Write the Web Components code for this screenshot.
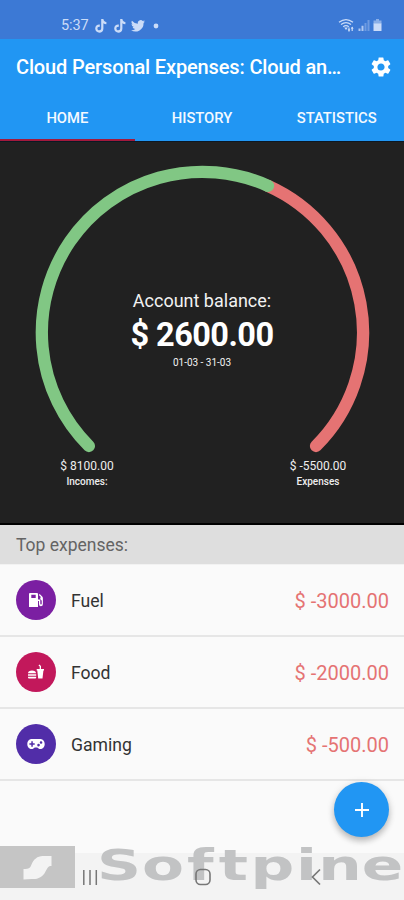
<!DOCTYPE html>
<html lang="en">
<head>
<meta charset="utf-8">
<title>Cloud Personal Expenses</title>
<style>
html,body{margin:0;padding:0}
body{width:404px;height:900px;overflow:hidden;background:#fafafa;font-family:Roboto,"Liberation Sans",sans-serif}
</style>
</head>
<body>
<expense-app></expense-app>
<script>
function define(name, html) {
  const t = document.createElement('template');
  t.innerHTML = html;
  customElements.define(name, class extends HTMLElement {
    constructor() {
      super();
      this.attachShadow({mode: 'open'}).append(t.content.cloneNode(true));
    }
  });
}

define('status-bar', `
<style>
:host{display:flex;height:39px;box-sizing:border-box;padding:13px 19px 0 61px;background:#3c79d5;color:#cbdcf8;align-items:center;justify-content:space-between}
.g{display:flex;align-items:center}
span{font-size:14.5px;line-height:24px;width:28px;letter-spacing:-.1px}
svg{display:block;fill:currentColor}
</style>
<div class="g"><span>5:37</span>
<svg style="margin-left:6px" width="12" height="14" viewBox="0 0 12 14"><path d="M6.2 0h2.2c.2 1.700 1.200 2.800 3 3v2.200c-1.200 0-2.200-.4-3-1v5.200c0 6-8.400 5.400-8.200 0 .1-2.500 2.100-4.200 4.600-3.900v2.400c-3.300-.6-2.900 3.600-.5 3.400 1.300-.1 1.900-.9 1.900-2.300z"/></svg>
<svg style="margin-left:7px" width="12" height="14" viewBox="0 0 12 14"><path d="M6.2 0h2.200c.2 1.700 1.200 2.800 3 3v2.200c-1.200 0-2.200-.4-3-1v5.200c0 6-8.400 5.400-8.200 0 .1-2.500 2.100-4.200 4.600-3.900v2.400c-3.300-.6-2.900 3.600-.5 3.400 1.300-.1 1.900-.9 1.900-2.300z"/></svg>
<svg style="margin-left:5px" width="14" height="14" viewBox="1 2 22 20"><path d="M23 4.900a9 9 0 0 1-2.600.7 4.500 4.500 0 0 0 2-2.500 9 9 0 0 1-2.900 1.100 4.500 4.500 0 0 0-7.700 4.100A12.800 12.800 0 0 1 2.500 3.600a4.500 4.500 0 0 0 1.400 6 4.500 4.500 0 0 1-2-.6 4.500 4.500 0 0 0 3.600 4.500 4.500 4.500 0 0 1-2 .1 4.500 4.500 0 0 0 4.200 3.100A9 9 0 0 1 1 18.600 12.800 12.800 0 0 0 20.700 7.200 9 9 0 0 0 23 4.900z"/></svg>
<svg style="margin-left:8px" width="6" height="6"><circle cx="3" cy="3" r="2.400"/></svg>
</div>
<div class="g" style="padding-right:2px">
<svg width="45" height="15" viewBox="0 0 45 15" style="margin-top:-2px">
<g fill="none" stroke="#cbdcf8" stroke-width="1.300"><path d="M1 4.300Q8 -1.200 15 4.300M3 6.500Q8 2.600 13 6.500M5.200 8.800Q8 6.600 10.800 8.800"/></g>
<path d="M6.200 9.500h3.600L8 12z"/><path d="M11 9.500v4M14.200 13v-4" stroke="#cbdcf8" stroke-width="1.200"/><path d="M9.600 11.300h2.800L11 13.600zM12.800 10.800h2.800l-1.400-2.300z"/>
<path opacity=".8" d="M20.500 10.500h2v2.500h-2zM23.500 7.800h2V13h-2z"/><path opacity=".35" d="M26.500 5h2v8h-2zM29.500 2h2v11h-2z"/>
<path opacity=".55" d="M38 1h3v1.500h2.500V6h-8V2.500H38z"/><path d="M35.500 5.500h8V13h-8z"/>
</svg></div>`);

define('title-bar', `
<style>
:host{display:flex;height:56px;align-items:center;justify-content:space-between;padding:0 11px 0 16px;color:#fff}
b{font-weight:500;font-size:20px;letter-spacing:-.14px;white-space:nowrap}
svg{display:block;fill:#fff;margin-top:-1px}
</style>
<b>Cloud Personal Expenses: Cloud an…</b>
<svg width="24" height="24" viewBox="0 0 24 24"><path d="M19.140 12.940c.04-.3.060-.61.060-.94s-.02-.64-.07-.94l2.030-1.580a.49.49 0 0 0 .12-.61l-1.920-3.320a.488.488 0 0 0-.59-.22l-2.390.96c-.5-.38-1.030-.7-1.620-.94l-.36-2.540a.484.484 0 0 0-.48-.41h-3.840c-.24 0-.43.17-.47.41l-.36 2.540c-.59.24-1.130.57-1.620.94l-2.390-.96c-.22-.08-.47 0-.59.22L2.740 8.870c-.12.21-.08.47.12.61l2.030 1.580c-.05.3-.09.63-.09.940s.02.64.07.94l-2.030 1.580a.49.49 0 0 0-.12.61l1.920 3.320c.12.22.37.29.59.22l2.390-.96c.5.38 1.030.7 1.620.94l.36 2.540c.05.24.24.41.48.41h3.840c.24 0 .44-.17.47-.41l.36-2.540c.59-.24 1.130-.56 1.620-.94l2.390.96c.22.08.47 0 .59-.22l1.920-3.320c.12-.22.07-.47-.12-.61zM12 15.600A3.610 3.610 0 0 1 8.400 12c0-1.980 1.620-3.600 3.600-3.600s3.600 1.620 3.600 3.600-1.620 3.600-3.600 3.600z"/></svg>`);

define('tab-item', `
<style>
:host{display:flex;flex:1;height:46px;box-sizing:border-box;justify-content:center;align-items:center;padding-top:2px;border-bottom:2px solid transparent;font-size:14.800px;letter-spacing:-.03px;font-weight:500;color:#f3f9ff}
:host([active]){border-bottom-color:#a31a3c}
</style><slot></slot>`);

define('tab-strip', `<style>:host{display:flex}</style><slot></slot>`);

define('gauge-label', `
<style>
:host{display:flex;flex-direction:column;align-items:center;width:90px;color:#eee}
.a{font-size:12px;line-height:15px}
.b{font-size:10px;line-height:15px;font-weight:500}
</style><div class="a"><slot name="amount"></slot></div><div class="b"><slot></slot></div>`);

define('balance-gauge', `
<style>
:host{display:grid;background:#212121;border-top:1px solid #0c1824;border-bottom:2px solid #000;box-sizing:border-box;height:384px;grid-template:381px/404px;color:#f2f2f2}
svg,.c,.l{grid-area:1/1}
svg{display:block;margin-top:-2px}
.c{display:flex;flex-direction:column;align-items:center;padding-top:147px}
.t{font-size:18px;line-height:24px}
.n{font-size:32.500px;line-height:43px;font-weight:700;color:#fff;letter-spacing:-.55px;padding-top:1px}
.d{font-size:10px;line-height:12px}
.l{display:flex;align-self:start;justify-content:space-between;padding:317px 41px 0 42px}
</style>
<svg width="404" height="384" viewBox="0 140 404 384" fill="none" stroke-width="12.300" stroke-linecap="round">
<path stroke="#e57373" d="M268 185.800A160.600 160.600 0 0 1 316 446"/>
<path stroke="#81c784" d="M88.900 446A160.600 160.600 0 0 1 268 185.800"/></svg>
<div class="c"><div class="t">Account balance:</div><div class="n">$ 2600.00</div><div class="d">01-03 - 31-03</div></div>
<div class="l"><gauge-label><span slot="amount">$ 8100.00</span>Incomes:</gauge-label><gauge-label><span slot="amount">$ -5500.00</span>Expenses</gauge-label></div>`);

define('section-header', `
<style>:host{display:flex;align-items:center;height:40px;box-sizing:border-box;padding:1px 16px 0;background:#dedede;border-bottom:1px solid #f2f2f2;color:#646464;font-size:17.500px;}</style><slot></slot>`);

define('expense-row', `
<style>
:host{display:flex;align-items:center;height:72px;box-sizing:border-box;padding:0 15px 1px 16px;border-bottom:2px solid #e6e6e6}
.i{width:40px;height:40px;border-radius:50%;background:var(--tone);display:grid;place-items:center;margin-right:15px}
.n{flex:1;font-size:17.600px;color:#333;padding-top:2px}
.v{font-size:20px;color:#e57373;padding-top:2px}
</style><div class="i"><slot name="icon"></slot></div><div class="n"><slot></slot></div><div class="v"><slot name="value"></slot></div>`);

define('add-button', `
<style>
:host{position:absolute;left:334px;top:782px;width:55px;height:55px;border-radius:50%;background:#2196f3;display:grid;place-items:center;box-shadow:0 4px 6px rgba(0,0,0,.22),0 1px 8px rgba(0,0,0,.1)}
svg{display:block}
</style><svg width="16" height="16"><path d="M8 1v14M1 8h14" stroke="#fff" stroke-width="1.900"/></svg>`);

define('nav-bar', `
<style>
:host{display:block;position:absolute;left:0;top:840px;width:404px;height:60px}
svg{display:block}
</style>
<svg width="404" height="60" viewBox="0 840 404 60">
<rect y="853" width="404" height="47" fill="#f3f3f3"/>
<rect y="846" width="75" height="42" fill="#c5c5c5"/>
<path d="M51.500 856v10c-3.500 0-4 2-6 5.500-3 6-8 8-14 7.500l-8 .5V869c6 0 6.500-1 8-4.500 2-5 6-8.500 11-8.500z" fill="#f3f3f3"/>
<text transform="scale(1.440 1)" x="67.400 98.600 129.900 152 174 205.500 221 251.200" y="880" font-family="DejaVu Sans,sans-serif" font-weight="700" font-size="42.500" fill="#c2c3c4">Softpine</text>
<g fill="none" stroke="#777"><path stroke-width="1.500" d="M83.800 870v15M90 870v15M96.300 870v15"/><rect x="196" y="869.500" width="14" height="15" rx="4.500" stroke-width="1.600"/><path stroke-width="1.700" d="M320 869.500l-7.500 7.500 7.500 7.500"/></g>
</svg>`);

define('expense-app', `
<style>
:host{display:block;position:relative;width:404px;height:900px;overflow:hidden;background:#fafafa}
header{background:#2196f3;}
svg{display:block}
</style>
<status-bar></status-bar>
<header><title-bar></title-bar><tab-strip><tab-item active>HOME</tab-item><tab-item>HISTORY</tab-item><tab-item>STATISTICS</tab-item></tab-strip></header>
<balance-gauge></balance-gauge>
<section-header>Top expenses:</section-header>
<expense-row style="--tone:#7b1fa2">
<svg slot="icon" width="16" height="16" viewBox="0 0 16 16"><path fill="#fff" fill-rule="evenodd" d="M1 2Q1 1 2 1h7q1 0 1 1v5.500h1.300q1 0 1 1v3.300q0 .8.700.8t.7-.8V8.500q-1.500-.4-1.500-2 0-1 .7-1.600L10.800 3l.9-.9 2.500 2.400q.7.700.7 1.700V12q0 2.200-2 2.200T11 12V9h-1v6H1zM3.300 2.800v3.200h4.400V2.800z"/></svg>Fuel<span slot="value">$ -3000.00</span></expense-row>
<expense-row style="--tone:#c2185b">
<svg slot="icon" width="18" height="16" viewBox="0 0 18 16"><path fill="#fff" d="M1 9.200Q1.200 6.500 5 6.500t4 2.700zM1 10.200h8.200v1.500H1zM1 12.700h8.200v.8q0 1-1 1H2q-1 0-1-1zM9.700 5h3V2.500L11.500 1.400l.8-.9 1.700 1.500v3h3v1.500h-.6l-.9 8h-4.300l-.9-8h-.6z"/></svg>Food<span slot="value">$ -2000.00</span></expense-row>
<expense-row style="--tone:#512da8">
<svg slot="icon" width="18" height="14" viewBox="0 0 18 14"><path fill="#fff" fill-rule="evenodd" d="M5 2h8c3 0 4.700 2.200 4.700 5s-1.700 5-4.200 5c-1.700 0-2.300-.6-3.300-1.500H7.800C6.800 11.400 6.200 12 4.500 12 2 12 .3 9.800.3 7S2 2 5 2zM4.300 4.300v1.900H2.400v1.600h1.900v1.900h1.500V7.800h1.900V6.200H5.800V4.300zM11.500 6.800a1.300 1.300 0 1 0 .1 2.600 1.300 1.300 0 0 0-.1-2.600zM14 4.200a1.300 1.300 0 1 0 .1 2.600 1.300 1.300 0 0 0-.1-2.600z"/></svg>Gaming<span slot="value">$ -500.00</span></expense-row>
<nav-bar></nav-bar><add-button></add-button>`);
</script>
</body>
</html>
